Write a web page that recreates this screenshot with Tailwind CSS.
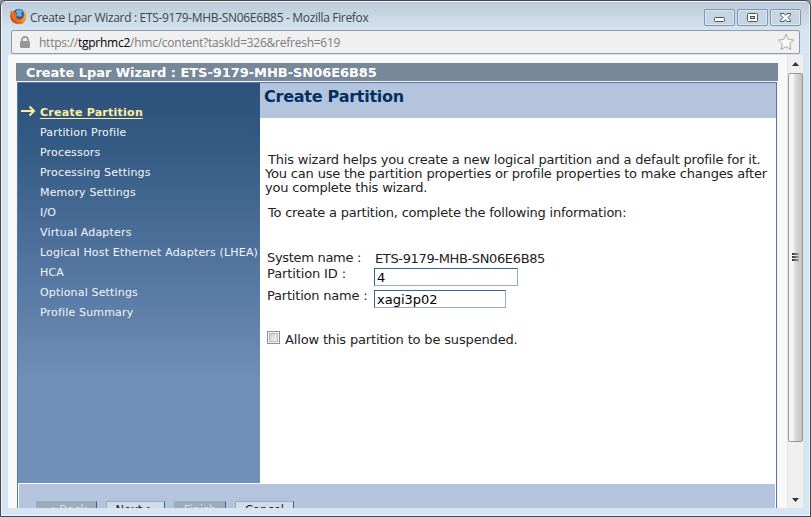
<!DOCTYPE html>
<html lang="en">
<head>
<meta charset="utf-8">
<title>Create Lpar Wizard</title>
<script src="https://cdn.jsdelivr.net/npm/@tailwindcss/browser@4"></script>
</head>
<body class="w-[811px] h-[517px] overflow-hidden bg-[#8a9299]">
<div class="w-[811px] h-[517px] flex flex-col overflow-hidden rounded-t-[6px] border border-[#45474b] bg-[#d7e4f1] shadow-[inset_0_0_0_1px_#eef4fa] pl-[7px] pr-[8px] pb-[8px] font-['DejaVu_Sans',sans-serif]">
  <!-- title bar -->
  <header class="h-[29px] shrink-0 flex items-start -ml-[6px] -mr-[7px] mt-px pl-[8px] pr-[8px] -mb-px bg-linear-to-b from-[#bdcbd8] to-[#d7e4f1]">
    <svg class="w-[17px] h-[17px] mt-[6px] shrink-0" viewBox="0 0 17 17">
      <circle cx="8.7" cy="7.8" r="6.9" fill="#24539b"/>
      <path d="M6 3c2-2 6-1.500 7 1l-2 1 1 3-3 1-2-2z" fill="#5fb4e6"/>
      <path d="M1 2.500 3 4l3 .2-.3 2 2.800 1-2.200 1.500c.2 2.600 4.700 3.500 6.700 0 1.200-2 .6-4-.5-6.200 2.500 1.500 4 4 3.300 7.500C15 14.500 12 16.500 8.300 16.300 3.500 16 .3 12.500.3 8.300.2 6 .3 4 1 2.500z" fill="#e3701b"/>
      <path d="M13.500 3c2 2 2.800 5 1.300 8-1 2-3 3-5 3 3-1.500 5-4 4.700-7z" fill="#f8c02e"/>
      <path d="M1 5c-.5 5 2.500 9 7.500 10-3 .8-8-2-8-7z" fill="#b8321c"/>
    </svg>
    <span class="ml-[3px] mt-[8px] text-[12px] leading-[16px] tracking-[-0.32px] whitespace-nowrap text-[#3c4650] font-['Open_Sans',sans-serif]">Create Lpar Wizard : ETS-9179-MHB-SN06E6B85 - Mozilla Firefox</span>
    <div class="ml-auto mt-[7px] flex gap-[2px]">
      <div class="w-[31px] h-[17px] rounded-[2px] border border-[#8493ad] bg-[#c7d5e2] shadow-[inset_0_0_0_1px_#dce7f1]"><svg class="block w-[29px] h-[15px]" viewBox="0 0 29 15"><rect x="9.500" y="7.500" width="10" height="4" rx="1" fill="#fff" stroke="#4b5367"/></svg></div>
      <div class="w-[31px] h-[17px] rounded-[2px] border border-[#8493ad] bg-[#c7d5e2] shadow-[inset_0_0_0_1px_#dce7f1]"><svg class="block w-[29px] h-[15px]" viewBox="0 0 29 15"><rect x="9.500" y="3.500" width="10" height="8" rx="1" fill="#fff" stroke="#4b5367"/><rect x="12.500" y="6.500" width="4" height="2" fill="#c7d5e2" stroke="#4b5367"/></svg></div>
      <div class="w-[31px] h-[17px] rounded-[2px] border border-[#8493ad] bg-[#c7d5e2] shadow-[inset_0_0_0_1px_#dce7f1]"><svg class="block w-[29px] h-[15px]" viewBox="0 0 29 15"><path d="M9.500 3.500h3.500l1.500 1.800L16 3.500h3.500v1.300L17 7.500l2.500 2.700v1.300H16l-1.500-1.800L13 11.500H9.500v-1.300L12 7.500 9.500 4.800z" fill="#fff" stroke="#4b5367" stroke-linejoin="round"/></svg></div>
    </div>
  </header>
  <!-- address bar -->
  <div class="h-[24px] shrink-0 ml-[3px] w-[789px] flex items-center rounded-[2px] border border-[#8f9ba8] bg-[#f0f0f0] pl-[8px] pr-[4px]">
    <svg class="w-[10px] h-[12px]" viewBox="0 0 10 12"><path d="M2 6V3.800a3 3 0 0 1 6 0V6" fill="none" stroke="#979797" stroke-width="1.700"/><rect y="5" width="10" height="7" rx="1" fill="#979797"/></svg>
    <span class="ml-[9px] mt-[2px] text-[12px] leading-[16px] tracking-[-0.25px] whitespace-nowrap text-[#7c7c7c] font-['Open_Sans',sans-serif]">https://<span class="text-black">tgprhmc2</span>/hmc/content?taskId=326&amp;refresh=619</span>
    <svg class="ml-auto w-[18px] h-[18px]" viewBox="0 0 18 18"><path d="M9 1.300l2.300 5.200 5.400.5-4 3.800 1.200 5.600L9 13.600l-4.900 2.800 1.200-5.600-4-3.800 5.400-.5z" fill="#fafafa" stroke="#a9a9a9" stroke-linejoin="round"/></svg>
  </div>
  <!-- viewport -->
  <div class="mt-px grow min-h-0 w-[795px] flex bg-[#f8f8f8] overflow-hidden">
    <main class="w-[762px] ml-[8px] mt-[8px] shrink-0">
      <h1 class="h-[18px] bg-[#778899] pl-[10px] text-[13px] leading-[19px] tracking-[-0.05px] font-bold text-white whitespace-nowrap">Create Lpar Wizard : ETS-9179-MHB-SN06E6B85</h1>
      <div class="mt-px ml-px w-[760px] h-[440px] border border-[#5078a8] bg-white">
        <div class="flex h-[400px]">
          <nav class="w-[242px] shrink-0 bg-linear-to-b from-[#2d527b] from-0% via-[#335a83] via-15% to-[#718fb9] to-75% text-[11px] leading-[20px] tracking-[0.17px] text-[#f3f6fa] whitespace-nowrap pt-[20px]">
            <div class="flex h-[20px] text-[#ffee99] font-bold">
              <svg class="w-[15px] h-[12px] mt-[2px] ml-[3px]" viewBox="0 0 15 12"><path d="M0 6h13M8.500 1.500 13 6l-4.500 4.500" fill="none" stroke="#ffee99" stroke-width="2"/></svg>
              <span class="ml-[4px] tracking-[0.25px] underline underline-offset-2">Create Partition</span>
            </div>
            <ul class="pl-[22px]">
              <li>Partition Profile</li>
              <li>Processors</li>
              <li>Processing Settings</li>
              <li>Memory Settings</li>
              <li>I/O</li>
              <li>Virtual Adapters</li>
              <li>Logical Host Ethernet Adapters (LHEA)</li>
              <li>HCA</li>
              <li>Optional Settings</li>
              <li>Profile Summary</li>
            </ul>
          </nav>
          <section class="grow min-w-0 text-[13px] leading-[14px] tracking-[-0.2px] text-[#222] whitespace-nowrap">
            <h2 class="h-[35px] bg-[#b4c4dd] pl-[4px] text-[16px] leading-[27px] tracking-[-0.25px] font-bold text-[#003060]">Create Partition</h2>
            <p class="mt-[35px] pl-[8px]">This wizard helps you create a new logical partition and a default profile for it.</p>
            <p class="pl-[5px] tracking-[-0.175px]">You can use the partition properties or profile properties to make changes after</p>
            <p class="pl-[5px]">you complete this wizard.</p>
            <p class="mt-[11px] pl-[8px] tracking-[-0.22px]">To create a partition, complete the following information:</p>
            <div class="mt-[31px] pl-[7px] grid grid-cols-[107px_auto]">
              <div class="h-[16px] tracking-[-0.3px]">System name :</div><div class="pl-px pt-px tracking-[-0.36px]">ETS-9179-MHB-SN06E6B85</div>
              <div class="h-[22px] tracking-[-0.12px]">Partition ID :</div><div class="mt-px w-[144px] h-[18px] border border-[#8fafce] border-t-[#336699] border-l-[#336699] pl-[2px] leading-[18px] text-black">4</div>
              <div class="h-[22px]">Partition name :</div><div class="mt-px w-[132px] h-[18px] border border-[#8fafce] border-t-[#336699] border-l-[#336699] pl-[2px] leading-[18px] tracking-normal text-black">xagi3p02</div>
            </div>
            <label class="mt-[20px] pl-[7px] flex">
              <span class="w-[13px] h-[13px] border border-[#8e8f8f] bg-[#f4f4f4] p-px"><span class="block w-[9px] h-[9px] border border-[#b8bcc2] bg-linear-to-br from-[#c9ccd1] to-[#f6f6f6]"></span></span>
              <span class="ml-[5px] mt-[2px] tracking-[-0.16px]">Allow this partition to be suspended.</span>
            </label>
          </section>
        </div>
        <footer class="mt-px mx-px h-[36px] bg-[#b4c4dd] pt-[17px] pl-[17px] flex gap-[9px] text-[11.5px] leading-[17px] text-center whitespace-nowrap text-[#222]">
          <div class="w-[61px] h-[19px] border border-[#8fb0d2] border-r-[#336699] bg-[#9eabb9] text-[#d8dde2]">&lt; Back</div>
          <div class="w-[59px] h-[19px] border border-[#8fb0d2] border-r-[#336699] bg-[#d3dbe8]">Next &gt;</div>
          <div class="w-[52px] h-[19px] border border-[#8fb0d2] border-r-[#336699] bg-[#9eabb9] text-[#d8dde2]">Finish</div>
          <div class="w-[59px] h-[19px] border border-[#8fb0d2] border-r-[#336699] bg-[#d3dbe8]">Cancel</div>
        </footer>
      </div>
    </main>
    <!-- scrollbar -->
    <div class="ml-[9px] w-[16px] shrink-0 flex flex-col items-center bg-[#efefef] border-l border-[#e6e6e6]">
      <div class="h-[18px] flex items-center"><svg class="w-[7px] h-[4px]" viewBox="0 0 7 4"><path d="M0 4 3.500 0 7 4z" fill="#333"/></svg></div>
      <div class="w-[15px] h-[369px] -ml-px pb-px flex flex-col items-center justify-center gap-px rounded-[2px] border border-[#979797] bg-linear-to-r from-[#f5f5f5] from-30% via-[#d6d6d8] via-55% to-[#c2c2c5]">
        <div class="w-[7px] h-[2px] bg-linear-to-r from-[#333] to-[#aaa]"></div><div class="w-[7px] h-[2px] bg-linear-to-r from-[#333] to-[#aaa]"></div><div class="w-[7px] h-[2px] bg-linear-to-r from-[#333] to-[#aaa]"></div>
      </div>
      <div class="mt-auto h-[16px] flex items-center"><svg class="w-[7px] h-[4px]" viewBox="0 0 7 4"><path d="M0 0 3.500 4 7 0z" fill="#333"/></svg></div>
    </div>
  </div>
</div>
</body>
</html>
